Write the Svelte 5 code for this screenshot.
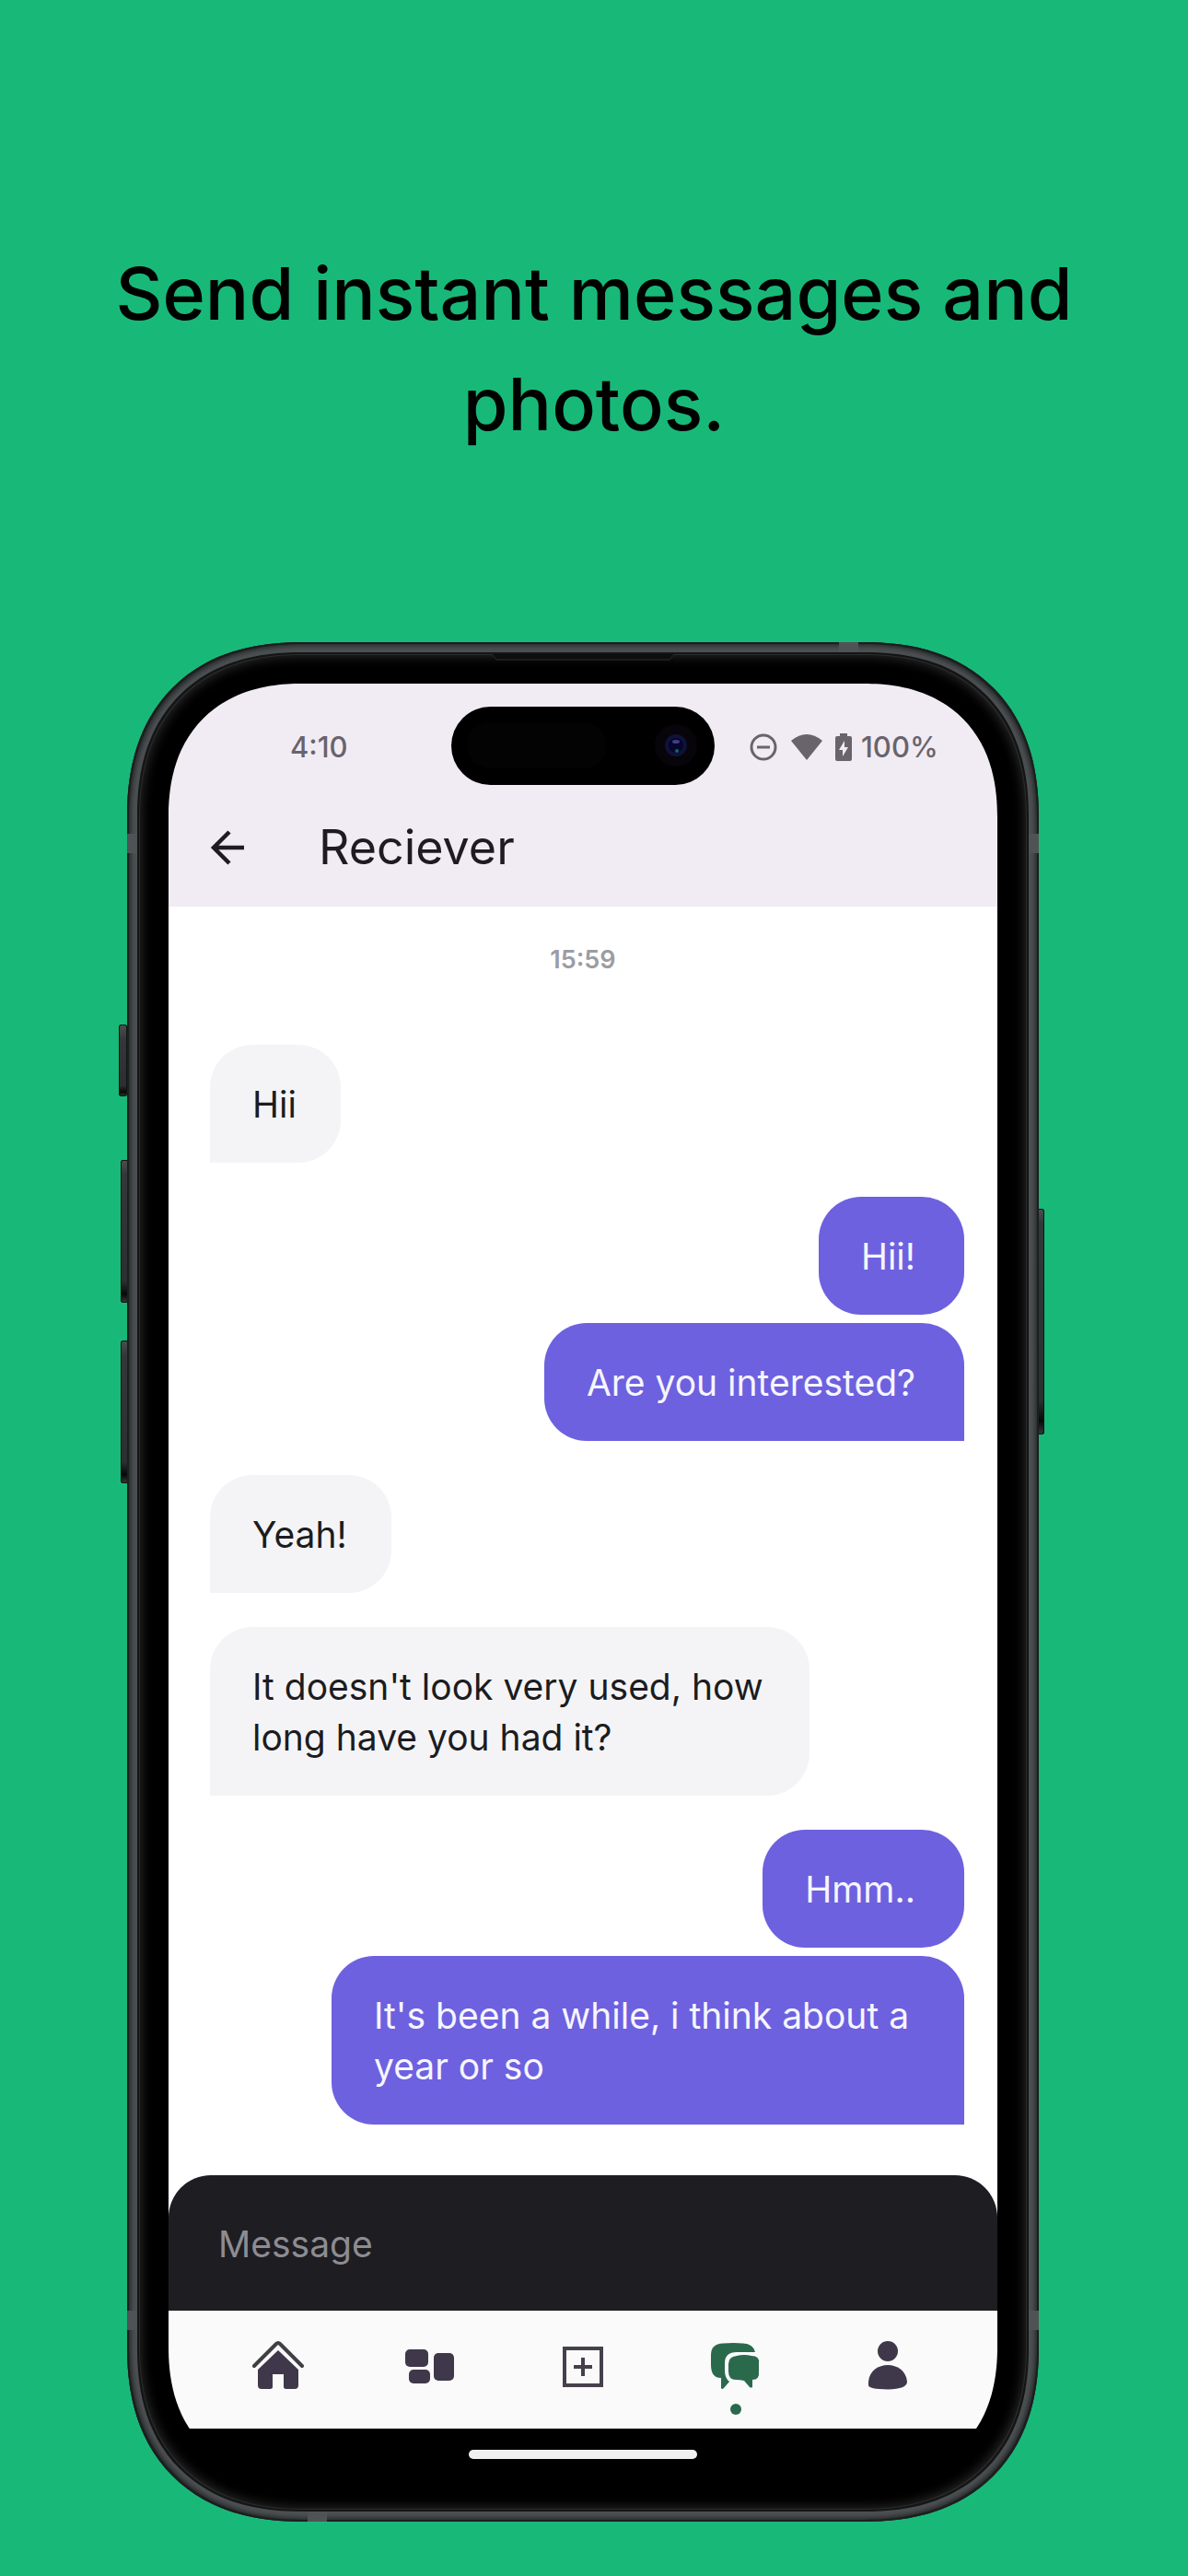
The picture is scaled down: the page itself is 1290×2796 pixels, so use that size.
<script>
  const groups = [
    { side: 'in', messages: ['Hii'] },
    { side: 'out', messages: ['Hii!', 'Are you interested?'] },
    { side: 'in', messages: ['Yeah!'] },
    { side: 'in', messages: ["It doesn't look very used, how long have you had it?"] },
    { side: 'out', messages: ['Hmm..', "It's been a while, i think about a year or so"] }
  ];
  let draft = $state('');
</script>

<main class="promo">
  <h1>Send instant messages and photos.</h1>

  <div class="phone">
    <span class="key action"></span>
    <span class="key volume-up"></span>
    <span class="key volume-down"></span>
    <span class="key power"></span>
    <div class="frame">
      <span class="band top"></span>
      <span class="band left upper"></span>
      <span class="band right upper"></span>
      <span class="band left lower"></span>
      <span class="band right lower"></span>
      <span class="band bottom"></span>
      <div class="bezel">
        <svg class="speaker" viewBox="0 0 198 7" aria-hidden="true"><path d="M0 0H198L193 6H5Z" fill="#0c0d0d" /><path d="M0 0L5 6H193L198 0" fill="none" stroke="#2b2c2c" /></svg>
        <div class="screen">
          <header>
            <div class="status">
              <time>4:10</time>
              <div class="island">
                <svg viewBox="0 0 286 85" aria-hidden="true">
                  <rect x="17" y="17" width="152" height="50" rx="25" fill="#030303" />
                  <circle cx="244" cy="42" r="23" fill="#07040a" />
                  <circle cx="244" cy="42" r="12" fill="#10123a" />
                  <circle cx="244" cy="42" r="8" fill="#06062c" />
                  <ellipse cx="244" cy="38" rx="4" ry="2" fill="#3f3e8a" />
                  <circle cx="245" cy="48" r="2" fill="#0d6a62" />
                </svg>
              </div>
              <div class="indicators">
                <svg width="30" height="30" viewBox="0 0 30 30" aria-hidden="true"><circle cx="15" cy="15" r="13" fill="none" stroke="currentColor" stroke-width="3" /><path d="M8 15H22" stroke="currentColor" stroke-width="3" /></svg>
                <svg class="wifi" width="34" height="30" viewBox="0 0 34 30" aria-hidden="true"><path d="M0 8Q17 -6 34 8L17 29Z" fill="currentColor" /></svg>
                <svg class="battery" width="18" height="30" viewBox="0 0 18 30" aria-hidden="true"><path d="M5 0H13V3H16Q18 3 18 5V28Q18 30 16 30H2Q0 30 0 28V5Q0 3 2 3H5Z" fill="currentColor" /><path d="M10 8L4 18H8V25L14 15H10Z" fill="#f1ecf4" /></svg>
                <span>100%</span>
              </div>
            </div>
            <div class="appbar">
              <button class="back" aria-label="Back">
                <svg width="38" height="38" viewBox="0 0 38 38" aria-hidden="true"><path d="M37 19H4M21 2L4 19L21 36" fill="none" stroke="currentColor" stroke-width="4.500" /></svg>
              </button>
              <h2>Reciever</h2>
            </div>
          </header>

          <section class="chat" aria-label="Conversation">
            <time class="stamp">15:59</time>
            {#each groups as group}
              <div class="group {group.side}">
                {#each group.messages as message}
                  <p>{message}</p>
                {/each}
              </div>
            {/each}
          </section>

          <form class="composer" onsubmit={(event) => event.preventDefault()}>
            <input type="text" placeholder="Message" aria-label="Message" bind:value={draft} />
          </form>

          <nav>
            <button aria-label="Home">
              <svg viewBox="0 0 56 54" width="56" height="54" aria-hidden="true"><path d="M2 28L26 4Q28 2 30 4L54 28" fill="none" stroke="#403f45" stroke-width="4" stroke-linecap="round" /><path d="M28 11L50 32V49Q50 53 46 53H38Q34 53 34 51V37H22V51Q22 53 18 53H10Q6 53 6 49V32Z" fill="currentColor" /></svg>
            </button>
            <button aria-label="Categories">
              <svg viewBox="0 0 54 54" width="54" height="54" aria-hidden="true" fill="currentColor"><rect x="0" y="10" width="25" height="19" rx="5" /><rect x="4" y="32" width="23" height="15" rx="5" /><rect x="31" y="14" width="22" height="30" rx="5" /></svg>
            </button>
            <button aria-label="Add">
              <svg viewBox="0 0 44 54" width="44" height="54" aria-hidden="true" fill="none" stroke="#46404c" stroke-width="4"><path d="M2 9H42V49H2ZM12 29H32M22 19V39" /></svg>
            </button>
            <button class="active" aria-label="Chats">
              <svg viewBox="0 0 53 54" width="53" height="54" aria-hidden="true" fill="currentColor"><path d="M48 13Q46 4 35 3.500Q25 2.500 13 3.500Q0 4 0 16V27Q0 41 11 41V52Q12 54 14 52L20 45Q15 41 15 33V25Q15 13 28 13Z" /><path d="M28 17Q36 15 44 17Q53 17 52 25V34Q53 43 45 43V51Q44 52 42 51L36 44Q32 43 27 43Q19 43 19 34V26Q19 18 28 17Z" /></svg>
              <span class="dot"></span>
            </button>
            <button aria-label="Profile">
              <svg viewBox="0 0 42 54" width="42" height="54" aria-hidden="true" fill="currentColor"><circle cx="21" cy="12" r="11" /><path d="M0 45C2 21 40 21 42 45Q42 53 21 53.500Q0 53 0 49Z" /></svg>
            </button>
          </nav>
          <div class="home-area"><span class="home-indicator"></span></div>
        </div>
      </div>
    </div>
  </div>
</main>

<style>
  :global(body) {
    margin: 0;
    background: #18b978;
  }
  .promo {
    min-height: 100vh;
    box-sizing: border-box;
    padding: 258px 0 59px;
    background: #18b978;
    font-family: Inter, 'Liberation Sans', sans-serif;
  }
  h1 {
    margin: 0 100px 199px;
    font-size: 79px;
    line-height: 120px;
    font-weight: 500;
    text-align: center;
    color: #000;
  }
  .phone {
    position: relative;
    margin: 0 162px 0 138px;
  }
  .frame {
    position: relative;
    padding: 13px;
    border-radius: 170px;
    background: #4c5052;
    box-shadow: inset 0 0 0 2px #1c1f1f, inset 0 0 5px 4px #26292a;
  }
  .bezel {
    position: relative;
    padding: 32px;
    border-radius: 157px;
    background: #000;
    box-shadow: 0 0 0 2px #141616, inset 0 0 0 1px #2a2b2b, inset 0 0 12px 3px #262626;
  }
  .screen {
    overflow: hidden;
    display: flex;
    flex-direction: column;
    border-radius: 125px;
  }
  /* Continuous-curvature corners where the browser has them. */
  @supports (corner-shape: squircle) {
    .frame, .bezel, .screen { corner-shape: superellipse(1.2); }
    .frame { border-radius: 190px; }
    .bezel { border-radius: 177px; }
    .screen { border-radius: 145px; }
  }
  .key {
    position: absolute;
    left: -7px;
    width: 9px;
    border-radius: 3px;
    background: linear-gradient(#4d5051, #34373a 16px, #2c2f30 85%, #080909 94%, #383b3c);
    box-shadow: inset 0 0 0 1px #131515;
  }
  .action { top: 415px; left: -9px; height: 78px; }
  .volume-up { top: 562px; height: 155px; }
  .volume-down { top: 758px; height: 155px; }
  .power { top: 615px; left: auto; right: -6px; height: 245px; }
  .band {
    position: absolute;
    background: #505355;
  }
  .top, .bottom { width: 21px; height: 12px; }
  .left, .right { width: 12px; height: 21px; }
  .top { top: 0; right: 196px; }
  .bottom { bottom: 0; left: 196px; }
  .left { left: 0; }
  .right { right: 0; }
  .upper { top: 208px; }
  .lower { bottom: 208px; }
  .speaker {
    position: absolute;
    top: 0;
    left: 50%;
    width: 198px;
    height: 7px;
    margin-left: -99px;
  }
  header {
    background: #f1ecf4;
    color: #1e1b22;
  }
  .status {
    display: grid;
    grid-template-columns: 1fr 286px 1fr;
    align-items: center;
    padding-top: 25px;
    color: #69636c;
    font-size: 31px;
    line-height: 40px;
    font-weight: 500;
  }
  .status time { padding: 3px 0 0 132px; }
  .island {
    height: 85px;
    border-radius: 43px;
    background: #000;
  }
  .island svg { display: block; width: 100%; }
  .indicators {
    display: flex;
    align-items: center;
    padding: 3px 0 0 38px;
  }
  .wifi { margin-left: 15px; }
  .battery { margin: 0 10px 0 14px; }
  .appbar {
    display: flex;
    align-items: center;
    gap: 80px;
    height: 132px;
    padding: 4px 45px 0;
    box-sizing: border-box;
  }
  button {
    display: flex;
    padding: 0;
    border: 0;
    background: none;
    color: inherit;
    cursor: pointer;
  }
  h2 {
    margin: 0;
    font-size: 52px;
    line-height: 60px;
    font-weight: 400;
  }
  .chat {
    display: flex;
    flex-direction: column;
    gap: 37px;
    padding: 38px 36px 55px 45px;
    background: #fff;
  }
  .stamp {
    align-self: center;
    padding-right: 9px;
    margin-bottom: 35px;
    font-size: 27px;
    line-height: 40px;
    font-weight: 600;
    color: #9c9ca3;
  }
  .group {
    display: flex;
    flex-direction: column;
    align-items: flex-start;
    gap: 9px;
  }
  .out { align-items: flex-end; }
  p {
    max-width: 687px;
    box-sizing: border-box;
    margin: 0;
    padding: 37px 53px 36px 46px;
    border-radius: 46px;
    font-size: 39px;
    line-height: 55px;
  }
  .in p {
    max-width: 651px;
    padding-right: 48px;
    background: #f4f4f7;
    color: #1c1c20;
    border-bottom-left-radius: 0;
  }
  .out p {
    background: #6d61df;
    color: #f6f5ff;
  }
  .out p:last-child { border-bottom-right-radius: 0; }
  .composer {
    display: flex;
    background: #fff;
  }
  input {
    flex: 1;
    min-width: 0;
    height: 147px;
    box-sizing: border-box;
    padding: 2px 54px 0;
    border: 0;
    border-radius: 46px 46px 0 0;
    background: #1e1d22;
    color: #fff;
    font: 400 39px Inter, 'Liberation Sans', sans-serif;
  }
  input::placeholder { color: #8d8c92; opacity: 1; }
  nav {
    display: grid;
    grid-template-columns: repeat(5, 1fr);
    height: 128px;
    padding: 0 36px;
    background: #fafafa;
    color: #3f384a;
  }
  nav button {
    position: relative;
    justify-content: center;
    padding-top: 32px;
  }
  .active { color: #2b694d; }
  .dot {
    position: absolute;
    top: 101px;
    left: 50%;
    width: 12px;
    height: 12px;
    margin-left: -6px;
    border-radius: 50%;
    background: currentColor;
  }
  .home-area {
    display: flex;
    justify-content: center;
    height: 33px;
    padding-top: 23px;
    background: #000;
  }
  .home-indicator {
    width: 248px;
    height: 10px;
    border-radius: 5px;
    background: #f0f0f0;
  }
</style>
